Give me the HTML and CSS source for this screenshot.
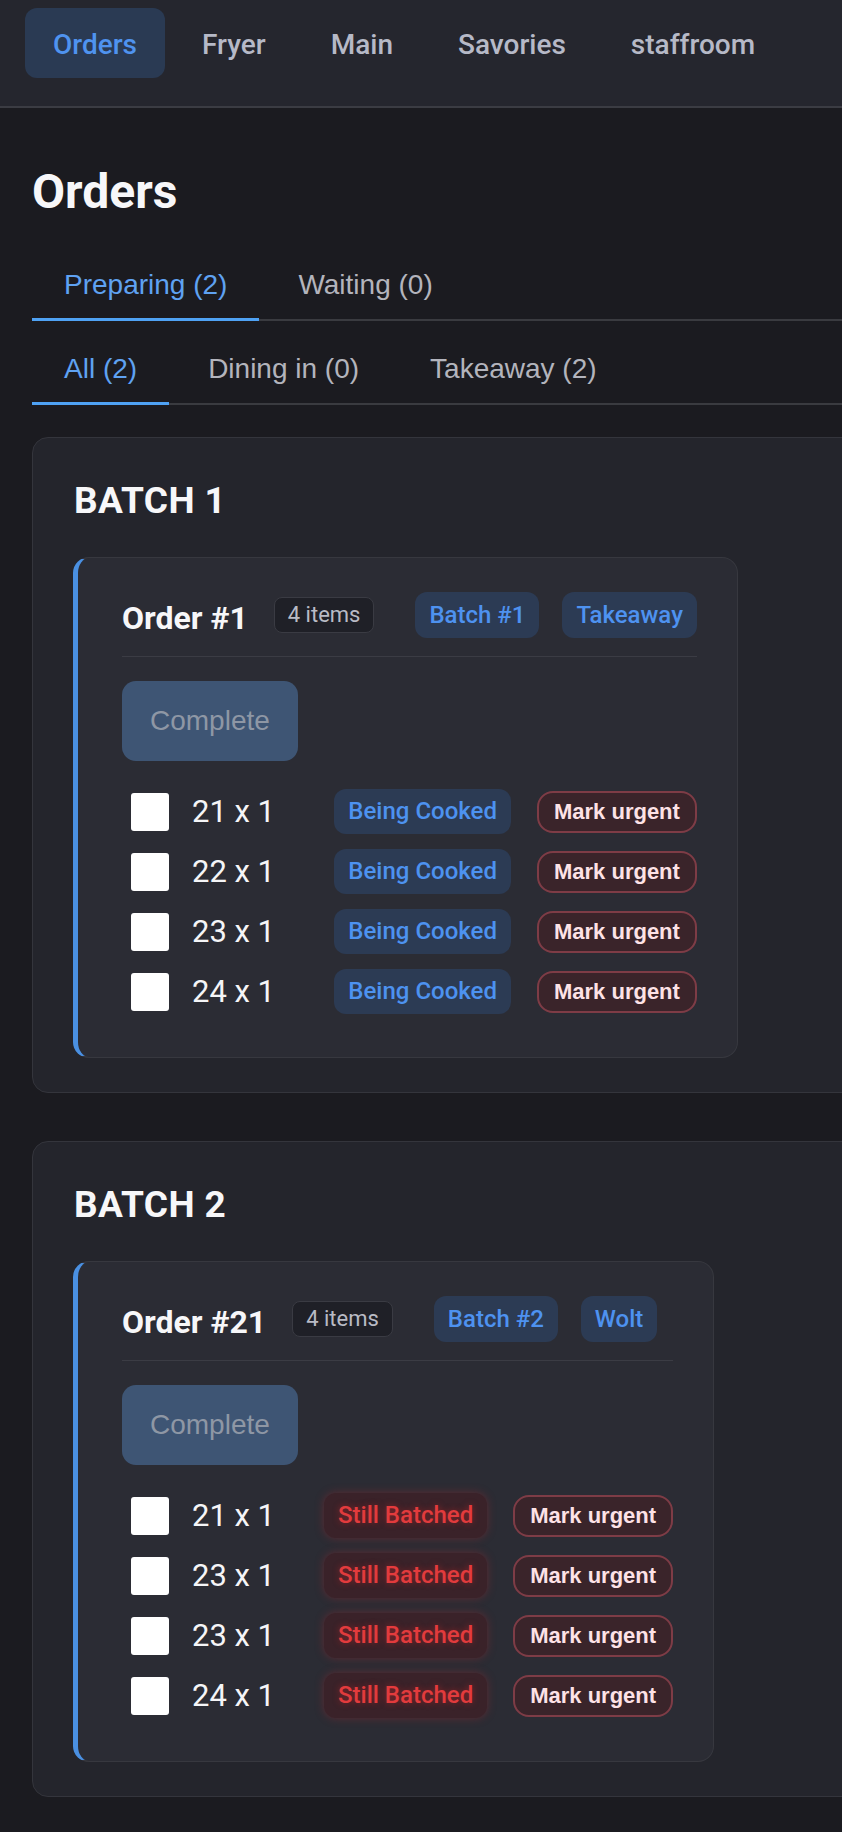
FILE: index.html
```html
<!DOCTYPE html>
<html lang="en">
<head>
<meta charset="utf-8">
<title>Orders</title>
<link rel="stylesheet" href="styles.css">
</head>
<body>
<nav class="topnav">
  <a class="nav-item active">Orders</a>
  <a class="nav-item">Fryer</a>
  <a class="nav-item">Main</a>
  <a class="nav-item">Savories</a>
  <a class="nav-item">staffroom</a>
</nav>
<main class="page">
  <h1 class="page-title">Orders</h1>
  <div class="tabs">
    <button class="tab active">Preparing (2)</button>
    <button class="tab">Waiting (0)</button>
  </div>
  <div class="tabs tabs-sub">
    <button class="tab active">All (2)</button>
    <button class="tab">Dining in (0)</button>
    <button class="tab">Takeaway (2)</button>
  </div>

  <section class="batch">
    <h2 class="batch-title">BATCH 1</h2>
    <article class="order">
      <header class="order-head">
        <h3 class="order-title">Order #1</h3>
        <span class="count">4 items</span>
        <span class="tag">Batch #1</span>
        <span class="tag">Takeaway</span>
      </header>
      <div class="actions"><button class="complete" disabled>Complete</button></div>
      <ul class="items">
        <li class="item"><span class="check"></span><span class="name">21 x 1</span><span class="status cooking">Being Cooked</span><button class="urgent">Mark urgent</button></li>
        <li class="item"><span class="check"></span><span class="name">22 x 1</span><span class="status cooking">Being Cooked</span><button class="urgent">Mark urgent</button></li>
        <li class="item"><span class="check"></span><span class="name">23 x 1</span><span class="status cooking">Being Cooked</span><button class="urgent">Mark urgent</button></li>
        <li class="item"><span class="check"></span><span class="name">24 x 1</span><span class="status cooking">Being Cooked</span><button class="urgent">Mark urgent</button></li>
      </ul>
    </article>
  </section>

  <section class="batch">
    <h2 class="batch-title">BATCH 2</h2>
    <article class="order">
      <header class="order-head">
        <h3 class="order-title">Order #21</h3>
        <span class="count">4 items</span>
        <span class="tag">Batch #2</span>
        <span class="tag">Wolt</span>
      </header>
      <div class="actions"><button class="complete" disabled>Complete</button></div>
      <ul class="items">
        <li class="item"><span class="check"></span><span class="name">21 x 1</span><span class="status batched">Still Batched</span><button class="urgent">Mark urgent</button></li>
        <li class="item"><span class="check"></span><span class="name">23 x 1</span><span class="status batched">Still Batched</span><button class="urgent">Mark urgent</button></li>
        <li class="item"><span class="check"></span><span class="name">23 x 1</span><span class="status batched">Still Batched</span><button class="urgent">Mark urgent</button></li>
        <li class="item"><span class="check"></span><span class="name">24 x 1</span><span class="status batched">Still Batched</span><button class="urgent">Mark urgent</button></li>
      </ul>
    </article>
  </section>
</main>
</body>
</html>
```

FILE: styles.css
```css
html, body {
  margin: 0;
  padding: 0;
  overflow-x: hidden;
}

body {
  background: #1b1b20;
  color: #f2f2f4;
  font-family: Roboto, "Noto Sans", sans-serif;
}

/* ---------- top navigation ---------- */
.topnav {
  display: flex;
  gap: 9px;
  padding: 8px 24px 28px 25px;
  background: #25262e;
  border-bottom: 2px solid #3b3c43;
}

.nav-item {
  display: flex;
  align-items: center;
  height: 68px;
  padding: 2px 28px 0;
  border-radius: 12px;
  font-size: 28px;
  font-weight: 500;
  color: #b6b9c7;
  cursor: pointer;
}

.nav-item.active {
  background: #2a3a53;
  color: #4f93ef;
}

/* ---------- page ---------- */
.page {
  width: 1100px;
  padding: 0 0 40px 32px;
}

.page-title {
  margin: 55px 0 34px;
  font-size: 48px;
  line-height: 58px;
  font-weight: 700;
  color: #f7f7f9;
}

.tabs {
  display: flex;
  gap: 7px;
  border-bottom: 2px solid #3a3b40;
}

.tabs-sub {
  margin-top: 18px;
}

.tab {
  margin: 0 0 -2px;
  padding: 14px 32px 17px;
  border: none;
  border-bottom: 3px solid transparent;
  background: none;
  font-family: "Liberation Sans", Arial, sans-serif;
  font-size: 28px;
  line-height: 32px;
  color: #b3b4bc;
  cursor: pointer;
}

.tab.active {
  color: #5fa2f2;
  border-bottom-color: #4fa2f4;
}

/* ---------- batch ---------- */
.batch {
  margin-top: 32px;
  margin-bottom: 48px;
  padding: 41px 40px 34px 40px;
  background: #24252c;
  border: 1px solid #34353c;
  border-radius: 16px;
}

.batch + .batch {
  margin-top: 0;
}

.batch-title {
  margin: 0 0 34px 1px;
  font-size: 37px;
  line-height: 44px;
  font-weight: 700;
  letter-spacing: 0.4px;
  color: #f7f7f9;
}

/* ---------- order card ---------- */
.order {
  width: fit-content;
  padding: 34px 40px 43px 44px;
  background: #2b2c34;
  border: 1px solid #37383f;
  border-left: 5px solid #4a90e2;
  border-radius: 16px;
}

.order-head {
  display: flex;
  align-items: center;
  padding-bottom: 18px;
  border-bottom: 1px solid #3b3c44;
}

.order-title {
  margin: 6px 26px 0 0;
  font-size: 32px;
  font-weight: 700;
  color: #f7f7f9;
}

.count {
  margin-right: 41px;
  padding: 0 13px;
  line-height: 34px;
  font-size: 22px;
  color: #b9bbc5;
  background: #1f2027;
  border: 1px solid #3a3b43;
  border-radius: 8px;
}

.tag {
  padding: 7px 14px;
  line-height: 32px;
  font-size: 24px;
  font-weight: 500;
  color: #4e92f0;
  background: #2c3b54;
  border-radius: 12px;
}

.tag + .tag {
  margin-left: 23px;
}

.actions {
  margin-top: 24px;
}

.complete {
  height: 80px;
  padding: 0 28px;
  border: none;
  border-radius: 14px;
  background: #3e5574;
  color: #8e97a5;
  font-family: "Liberation Sans", Arial, sans-serif;
  font-size: 28px;
}

/* ---------- items ---------- */
.items {
  list-style: none;
  margin: 28px 0 0;
  padding: 0;
  display: flex;
  flex-direction: column;
  gap: 15px;
}

.item {
  display: flex;
  align-items: center;
  height: 45px;
}

.check {
  flex: none;
  width: 38px;
  height: 38px;
  margin: 0 23px 0 9px;
  background: #ffffff;
  border-radius: 3px;
}

.name {
  flex: 1;
  margin-right: 49px;
  font-size: 31px;
  color: #f5f5f7;
  white-space: nowrap;
}

.status {
  flex: none;
  margin-right: 26px;
  padding: 6px 14px;
  line-height: 33px;
  font-size: 24px;
  font-weight: 500;
  border-radius: 12px;
  white-space: nowrap;
}

.status.cooking {
  color: #4d92f0;
  background: #2c3b54;
}

.status.batched {
  color: #e23b3d;
  background: #3a2229;
  box-shadow: 0 0 10px rgba(190, 40, 50, 0.35);
  text-shadow: 0 0 6px rgba(220, 40, 40, 0.5);
}

.urgent {
  flex: none;
  padding: 6px 15px;
  border: 2px solid #7e3c46;
  border-radius: 16px;
  background: #3a242a;
  color: #fde2e6;
  font-family: "Liberation Sans", Arial, sans-serif;
  font-size: 22px;
  font-weight: 700;
  line-height: 26px;
  white-space: nowrap;
  cursor: pointer;
}
```
